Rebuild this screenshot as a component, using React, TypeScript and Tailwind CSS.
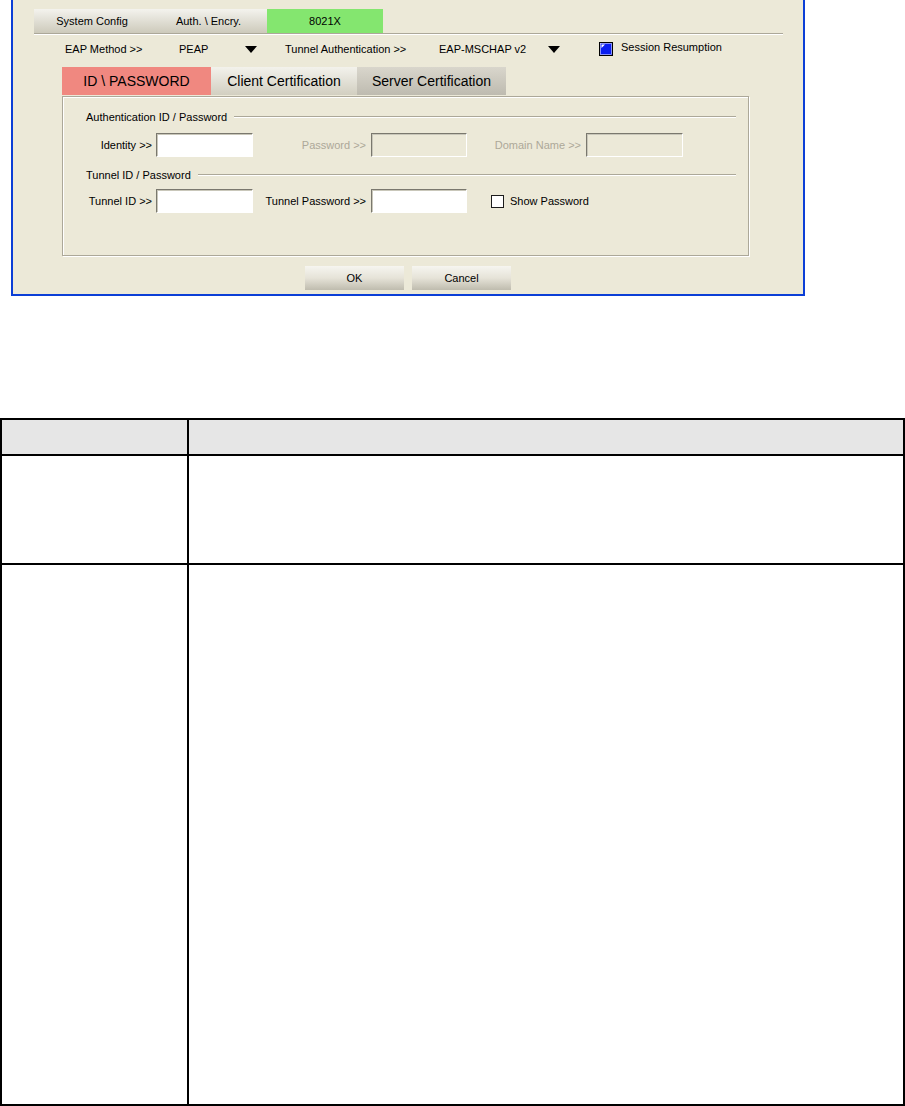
import React from 'react'

const font = { fontFamily: '"Liberation Sans", Arial, sans-serif' }

// 下拉箭头
const DropArrow: React.FC = () => (
	<svg width="12" height="7" viewBox="0 0 12 7" className="block">
		<polygon points="0,0 12,0 6,7" fill="#000" />
	</svg>
)

const TextBox: React.FC<{ disabled?: boolean; w: string }> = ({ disabled, w }) => (
	<div
		className={`${w} h-[24px] border border-t-[#7a786e] border-l-[#7a786e] border-r-white border-b-white shadow-[inset_1px_1px_0_#c9c7ba] ${
			disabled ? 'bg-[#ece9d8]' : 'bg-white'
		}`}
	/>
)

const SectionTitle: React.FC<{ title: string }> = ({ title }) => (
	<div className="flex items-center pl-[23px] pr-[12px] h-[14px]">
		<span className="text-[11px] leading-[14px] text-black whitespace-nowrap">{title}</span>
		<div className="flex-1 ml-[7px] h-[2px] border-t border-[#aca899] border-b border-b-white" />
	</div>
)

const App: React.FC = () => {
	return (
		<div className="w-[905px] h-[1106px] bg-white overflow-hidden" style={font}>
			{/* 对话框 */}
			<div className="ml-[11px] w-[794px] h-[296px] border-x-2 border-b-2 border-[#0b3ed6] bg-[#ece9d8]">
				{/* 顶部标签 */}
				<div className="flex ml-[21px] pt-[9px] h-[33px]">
					<div className="w-[116px] h-[24px] flex items-center justify-center text-[11px] bg-linear-to-b from-[#f4f3ee] to-[#cdcabb]">
						System Config
					</div>
					<div className="w-[117px] h-[24px] flex items-center justify-center text-[11px] bg-linear-to-b from-[#f4f3ee] to-[#cdcabb]">
						Auth. \ Encry.
					</div>
					<div className="w-[116px] h-[24px] flex items-center justify-center text-[11px] bg-[#84e66f]">
						8021X
					</div>
				</div>
				<div className="ml-[21px] w-[749px] h-[2px] border-t border-[#aca899] border-b border-b-white" />

				{/* EAP 方法行 */}
				<div className="flex items-center mt-[7px] h-[14px] text-[11px] leading-[14px] text-black">
					<span className="ml-[52px] w-[114px]">EAP Method &gt;&gt;</span>
					<span className="w-[66px]">PEAP</span>
					<span className="w-[40px]"><DropArrow /></span>
					<span className="w-[154px]">Tunnel Authentication &gt;&gt;</span>
					<span className="w-[109px]">EAP-MSCHAP v2</span>
					<span className="w-[51px]"><DropArrow /></span>
					<svg width="14" height="14" viewBox="0 0 14 14" className="block">
						<rect x="0.5" y="0.5" width="13" height="13" fill="#0a1ef0" stroke="#000" />
						<rect x="1.5" y="1.5" width="11" height="11" fill="none" stroke="#dfe3ff" strokeWidth="0.6" />
						<polygon points="2.5,2.5 6,2.5 2.5,6" fill="#fff" />
					</svg>
					<span className="ml-[8px] -mt-[4px]">Session Resumption</span>
				</div>

				{/* 子标签 */}
				<div className="flex ml-[49px] mt-[11px] h-[28px] text-[14px]">
					<div className="w-[149px] flex items-center justify-center bg-[#f08880]">ID \ PASSWORD</div>
					<div className="w-[146px] flex items-center justify-center bg-linear-to-b from-[#f3f2ec] to-[#d2cfc1]">
						Client Certification
					</div>
					<div className="w-[149px] flex items-center justify-center bg-linear-to-b from-[#d9d6cc] to-[#bebbb0]">
						Server Certification
					</div>
				</div>

				{/* 面板 */}
				<div className="ml-[49px] mt-[1px] w-[687px] h-[160px] border border-[#aca899] shadow-[inset_1px_1px_0_#fff,1px_1px_0_#fff]">
					<div className="pt-[13px]">
						<SectionTitle title="Authentication ID / Password" />
					</div>
					<div className="flex items-center mt-[9px] text-[11px]">
						<span className="w-[93px] text-right pr-[4px]">Identity &gt;&gt;</span>
						<TextBox w="w-[97px]" />
						<span className="w-[118px] text-right pr-[5px] text-[#aca899]">Password &gt;&gt;</span>
						<TextBox w="w-[96px]" disabled />
						<span className="w-[119px] text-right pr-[5px] text-[#aca899]">Domain Name &gt;&gt;</span>
						<TextBox w="w-[97px]" disabled />
					</div>
					<div className="mt-[11px]">
						<SectionTitle title="Tunnel ID / Password" />
					</div>
					<div className="flex items-center mt-[7px] text-[11px]">
						<span className="w-[93px] text-right pr-[4px]">Tunnel ID &gt;&gt;</span>
						<TextBox w="w-[97px]" />
						<span className="w-[118px] text-right pr-[5px]">Tunnel Password &gt;&gt;</span>
						<TextBox w="w-[96px]" />
						<span className="ml-[24px] w-[13px] h-[13px] border border-[#1c1c1c] bg-white" />
						<span className="ml-[6px]">Show Password</span>
					</div>
				</div>

				{/* 按钮 */}
				<div className="flex gap-[8px] ml-[292px] mt-[10px]">
					<button className="w-[99px] h-[24px] text-[11px] text-black bg-linear-to-b from-[#f6f5f0] via-[#e6e3d8] to-[#bfbcae]">
						OK
					</button>
					<button className="w-[99px] h-[24px] text-[11px] text-black bg-linear-to-b from-[#f6f5f0] via-[#e6e3d8] to-[#bfbcae]">
						Cancel
					</button>
				</div>
			</div>

			{/* 说明表格 */}
			<div className="mt-[122px] w-[905px] border-2 border-black">
				<div className="flex h-[36px] bg-[#e6e6e6] border-b-2 border-black">
					<div className="w-[187px] border-r-2 border-black" />
					<div className="flex-1" />
				</div>
				<div className="flex h-[109px] border-b-2 border-black">
					<div className="w-[187px] border-r-2 border-black" />
					<div className="flex-1" />
				</div>
				<div className="flex h-[539px]">
					<div className="w-[187px] border-r-2 border-black" />
					<div className="flex-1" />
				</div>
			</div>
		</div>
	)
}

export default App
